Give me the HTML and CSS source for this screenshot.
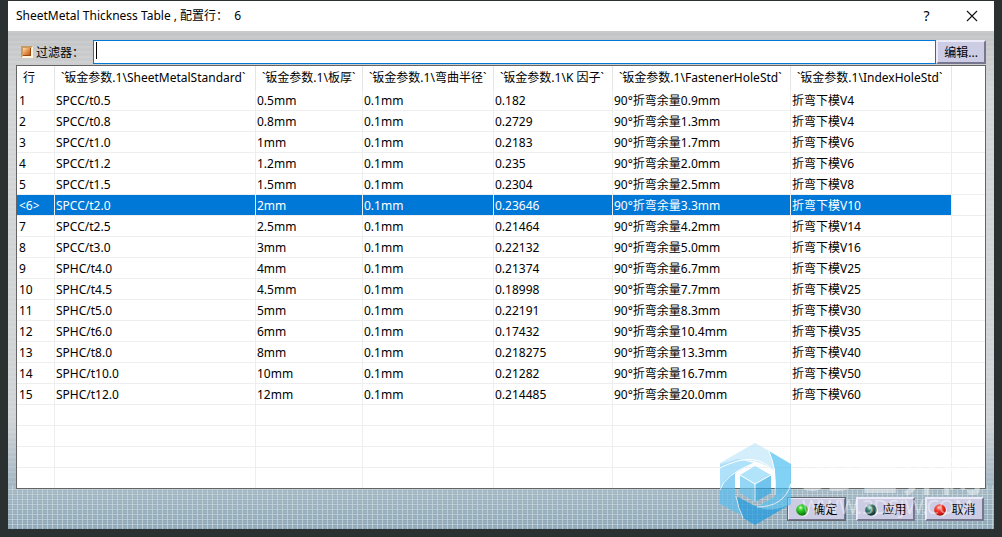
FILE: index.html
```html
<!DOCTYPE html>
<html lang="zh-CN">
<head>
<meta charset="utf-8">
<title>SheetMetal Thickness Table</title>
<link rel="stylesheet" href="styles.css">
</head>
<body>
<main class="dialog">
  <header class="titlebar">
    <h1 class="title">SheetMetal Thickness Table , 配置行：  6</h1>
    <button class="title-button" type="button" aria-label="帮助">?</button>
    <button class="title-button" type="button" aria-label="关闭">
      <svg width="12" height="12" viewBox="0 0 12 12"><path d="M1 1L11 11M11 1L1 11" stroke="#111" stroke-width="1.1"/></svg>
    </button>
  </header>
  <div class="content">
    <div class="filter">
      <svg class="filter-icon" width="12" height="12" viewBox="0 0 12 12">
        <defs><linearGradient id="copper" x1="0" y1="0" x2="1" y2="1"><stop offset="0" stop-color="#ffe0b0"/><stop offset=".5" stop-color="#e58a40"/><stop offset="1" stop-color="#a84f14"/></linearGradient></defs>
        <path d="M0 0H12V12H0Z" fill="#fff3dc"/><path d="M0 0H12L10 2H2V10L0 12Z" fill="#c99a62"/><path d="M2 2H10V10H2Z" fill="url(#copper)"/><path d="M2 9H9V2H10V10H2Z" fill="#9c4a12"/>
      </svg>
      <label class="filter-label" for="filter">过滤器：</label>
      <input class="filter-input" id="filter" type="text">
      <button class="button" type="button">编辑...</button>
    </div>
    <div class="grid-frame">
      <table class="grid">
        <colgroup><col class="c-row"><col class="c-standard"><col class="c-thick"><col class="c-radius"><col class="c-factor"><col class="c-fastener"><col class="c-index"><col></colgroup>
        <thead><tr><th>行</th><th>`钣金参数.1\SheetMetalStandard`</th><th>`钣金参数.1\板厚`</th><th>`钣金参数.1\弯曲半径`</th><th>`钣金参数.1\K 因子`</th><th>`钣金参数.1\FastenerHoleStd`</th><th>`钣金参数.1\IndexHoleStd`</th><th></th></tr></thead>
        <tbody>
          <tr><td>1</td><td>SPCC/t0.5</td><td>0.5mm</td><td>0.1mm</td><td>0.182</td><td>90°折弯余量0.9mm</td><td>折弯下模V4</td><td></td></tr>
          <tr><td>2</td><td>SPCC/t0.8</td><td>0.8mm</td><td>0.1mm</td><td>0.2729</td><td>90°折弯余量1.3mm</td><td>折弯下模V4</td><td></td></tr>
          <tr><td>3</td><td>SPCC/t1.0</td><td>1mm</td><td>0.1mm</td><td>0.2183</td><td>90°折弯余量1.7mm</td><td>折弯下模V6</td><td></td></tr>
          <tr><td>4</td><td>SPCC/t1.2</td><td>1.2mm</td><td>0.1mm</td><td>0.235</td><td>90°折弯余量2.0mm</td><td>折弯下模V6</td><td></td></tr>
          <tr><td>5</td><td>SPCC/t1.5</td><td>1.5mm</td><td>0.1mm</td><td>0.2304</td><td>90°折弯余量2.5mm</td><td>折弯下模V8</td><td></td></tr>
          <tr class="selected"><td>&lt;6&gt;</td><td>SPCC/t2.0</td><td>2mm</td><td>0.1mm</td><td>0.23646</td><td>90°折弯余量3.3mm</td><td>折弯下模V10</td><td></td></tr>
          <tr><td>7</td><td>SPCC/t2.5</td><td>2.5mm</td><td>0.1mm</td><td>0.21464</td><td>90°折弯余量4.2mm</td><td>折弯下模V14</td><td></td></tr>
          <tr><td>8</td><td>SPCC/t3.0</td><td>3mm</td><td>0.1mm</td><td>0.22132</td><td>90°折弯余量5.0mm</td><td>折弯下模V16</td><td></td></tr>
          <tr><td>9</td><td>SPHC/t4.0</td><td>4mm</td><td>0.1mm</td><td>0.21374</td><td>90°折弯余量6.7mm</td><td>折弯下模V25</td><td></td></tr>
          <tr><td>10</td><td>SPHC/t4.5</td><td>4.5mm</td><td>0.1mm</td><td>0.18998</td><td>90°折弯余量7.7mm</td><td>折弯下模V25</td><td></td></tr>
          <tr><td>11</td><td>SPHC/t5.0</td><td>5mm</td><td>0.1mm</td><td>0.22191</td><td>90°折弯余量8.3mm</td><td>折弯下模V30</td><td></td></tr>
          <tr><td>12</td><td>SPHC/t6.0</td><td>6mm</td><td>0.1mm</td><td>0.17432</td><td>90°折弯余量10.4mm</td><td>折弯下模V35</td><td></td></tr>
          <tr><td>13</td><td>SPHC/t8.0</td><td>8mm</td><td>0.1mm</td><td>0.218275</td><td>90°折弯余量13.3mm</td><td>折弯下模V40</td><td></td></tr>
          <tr><td>14</td><td>SPHC/t10.0</td><td>10mm</td><td>0.1mm</td><td>0.21282</td><td>90°折弯余量16.7mm</td><td>折弯下模V50</td><td></td></tr>
          <tr><td>15</td><td>SPHC/t12.0</td><td>12mm</td><td>0.1mm</td><td>0.214485</td><td>90°折弯余量20.0mm</td><td>折弯下模V60</td><td></td></tr>
          <tr><td></td><td></td><td></td><td></td><td></td><td></td><td></td><td></td></tr>
          <tr><td></td><td></td><td></td><td></td><td></td><td></td><td></td><td></td></tr>
          <tr><td></td><td></td><td></td><td></td><td></td><td></td><td></td><td></td></tr>
          <tr><td></td><td></td><td></td><td></td><td></td><td></td><td></td><td></td></tr>
        </tbody>
      </table>
    </div>
    <footer class="actions">
      <button class="button default" type="button">
        <svg width="14" height="14" viewBox="0 0 14 14"><defs><radialGradient id="green" cx=".38" cy=".3" r=".75"><stop offset="0" stop-color="#d8ffc8"/><stop offset=".3" stop-color="#35d326"/><stop offset="1" stop-color="#036505"/></radialGradient></defs><ellipse cx="8" cy="8" rx="6" ry="5.5" fill="#fff" opacity=".7"/><circle cx="7" cy="7" r="5.8" fill="url(#green)"/></svg>确定</button>
      <button class="button" type="button">
        <svg width="14" height="14" viewBox="0 0 14 14"><defs><radialGradient id="teal" cx=".38" cy=".3" r=".7"><stop offset="0" stop-color="#d2eee2"/><stop offset=".35" stop-color="#438474"/><stop offset="1" stop-color="#082c2b"/></radialGradient></defs><ellipse cx="8" cy="8" rx="6" ry="5.5" fill="#fff" opacity=".7"/><circle cx="7" cy="7" r="5.8" fill="url(#teal)"/></svg>应用</button>
      <button class="button" type="button">
        <svg width="14" height="14" viewBox="0 0 14 14"><defs><radialGradient id="red" cx=".4" cy=".3" r=".75"><stop offset="0" stop-color="#ffd8d0"/><stop offset=".3" stop-color="#f34b3d"/><stop offset=".7" stop-color="#d91812"/><stop offset="1" stop-color="#731411"/></radialGradient></defs><ellipse cx="8" cy="8" rx="6" ry="5.5" fill="#fff" opacity=".7"/><circle cx="7" cy="7" r="5.8" fill="url(#red)"/></svg>取消</button>
    </footer>
  </div>
  <div class="watermark">
    <svg width="73" height="82" viewBox="4 4 73 82">
      <g opacity=".68">
        <path d="M5 24L40 4 56 13 59 32Q43 19 23 22L5 29Z" fill="#c0e6fb"/>
        <path d="M54 12L76 25V44Q70 56 56 62L60 58V31Z" fill="#48bdf2"/>
        <path d="M5 25L23 20 39 24 22 33Q12 44 6 51L5 49Z" fill="#8bd4f8"/>
        <path d="M5 51Q8 39 20 33V58L28 77 5 65Z" fill="#58bdf0"/>
        <path d="M21 57L40 67 61 69 76 65 40 86 28 79Q22 69 21 57Z" fill="#1799e2"/>
        <path d="M76 45V65Q58 74 42 68L59 58Q70 53 76 45Z" fill="#55c1f3"/>
        <path d="M40 27L56 36 40 45 25 36Z" fill="#8dd6fa"/>
        <path d="M25 36L40 45V63L25 54Z" fill="#63c3f1"/>
        <path d="M56 36L40 45V63L56 54Z" fill="#2fa9e5"/>
        <path d="M5 29Q42 10 59 33M54 12Q62 31 60 56M5 51Q9 36 39 24M21 57Q23 69 28 79M42 68Q69 68 76 45M25 36L40 45 56 36M40 45V63" fill="none" stroke="#fff" stroke-width="1"/>
      </g>
    </svg>
    <div class="watermark-text"><span class="watermark-name">3D世界网</span><span class="watermark-url">WWW.3DSJW.COM</span></div>
  </div>
</main>
</body>
</html>
```
FILE: styles.css
```css
* { box-sizing: border-box; }
body {
  margin: 0;
  padding: 1px 8px 8px;
  min-height: 100vh;
  display: flex;
  background: #2b3031;
  color: #000;
  font: 12px/20px "Noto Sans", "Noto Sans CJK SC", sans-serif;
}
button, input { font: inherit; color: inherit; }
.dialog {
  position: relative;
  flex: 1;
  min-width: 0;
  display: flex;
  flex-direction: column;
  background: #d0d3d4;
}
.titlebar {
  display: flex;
  align-items: center;
  height: 30px;
  padding-left: 8px;
  background: #fff;
}
.title { flex: 1; margin: 0; font-size: 12px; font-weight: 400; white-space: pre; }
.title-button {
  display: flex;
  align-items: center;
  justify-content: center;
  width: 45px;
  height: 30px;
  padding: 0;
  border: 0;
  background: none;
  font-size: 14px;
}
.content {
  flex: 1;
  display: flex;
  flex-direction: column;
  padding: 9px 8px 8px;
  background:
    repeating-linear-gradient(90deg, transparent 0 4px, #c8d8ddb0 4px 5px) 0 100% / 100% 44px no-repeat,
    repeating-linear-gradient(0deg, transparent 0 4px, #c8d8ddb0 4px 5px) 0 100% / 100% 44px no-repeat,
    repeating-linear-gradient(#ffffff18 0 2px, transparent 2px 5px),
    linear-gradient(#c3c4c5 0, #d2d4d5 60px, #d0d3d5 calc(100% - 110px), #a4b7c3 calc(100% - 45px), #8aa4b5 100%);
}
.filter { display: flex; align-items: center; height: 24px; margin-bottom: 1px; }
.filter-icon { margin: 0 3px 0 5px; }
.filter-label { width: 57px; padding-top: 2px; }
.filter-input {
  flex: 1;
  min-width: 0;
  height: 24px;
  padding: 1px 2px;
  border: 1px solid #0078d7;
  border-radius: 0;
  outline: 0;
  background: linear-gradient(#000, #000) 2px 1px / 1px 17px no-repeat #fff;
}
.button {
  display: flex;
  align-items: center;
  justify-content: center;
  gap: 4px;
  height: 24px;
  padding: 2px 6px 0;
  border: 2px solid;
  border-color: #ecebfa #77768f #77768f #ecebfa;
  background: #cdcce5;
  white-space: nowrap;
}
.grid-frame { flex: 1; border: 1px solid #646464; background: #fff; overflow: hidden; }
.grid { width: 100%; table-layout: fixed; border-collapse: separate; border-spacing: 0; }
.c-row { width: 38px; }
.c-standard { width: 201px; }
.c-thick { width: 107px; }
.c-radius { width: 131px; }
.c-factor { width: 119px; }
.c-fastener { width: 178px; }
.c-index { width: 161px; }
.grid th, .grid td {
  padding: 0 0 0 1px;
  text-align: left;
  font-weight: 400;
  white-space: nowrap;
  border-right: 1px solid #eee;
}
.grid th { height: 24px; padding-left: 6px; border-color: #e5e5e5; }
.grid td { height: 21px; padding-top: 2px; line-height: 18px; border-bottom: 1px solid #eee; }
.grid td:first-child { padding-left: 2px; }
.grid th:last-child, .grid td:last-child { border-right: 0; }
.grid tr:last-child td { height: 20px; border-bottom: 0; }
.grid thead th { height: 24px; }
.selected td:not(:last-child) { background: #0078d7; background-clip: padding-box; color: #fff; }
.actions { display: flex; justify-content: flex-end; gap: 10px; padding: 8px 2px 0 0; }
.actions .button { width: 59px; height: 24px; }
.actions .default { outline: 1px solid #64646c; outline-offset: -1px; }
.watermark {
  position: absolute;
  right: 8px;
  bottom: 4px;
  display: flex;
  gap: 10px;
  pointer-events: none;
}
.watermark-text { display: flex; flex-direction: column; width: 184px; color: #ffffff70; white-space: nowrap; padding-top: 12px; }
.watermark > svg { flex: none; }
.watermark-name { font-size: 42px; font-weight: 700; line-height: 40px; }
.watermark-url { font-size: 20px; line-height: 24px; }
```
